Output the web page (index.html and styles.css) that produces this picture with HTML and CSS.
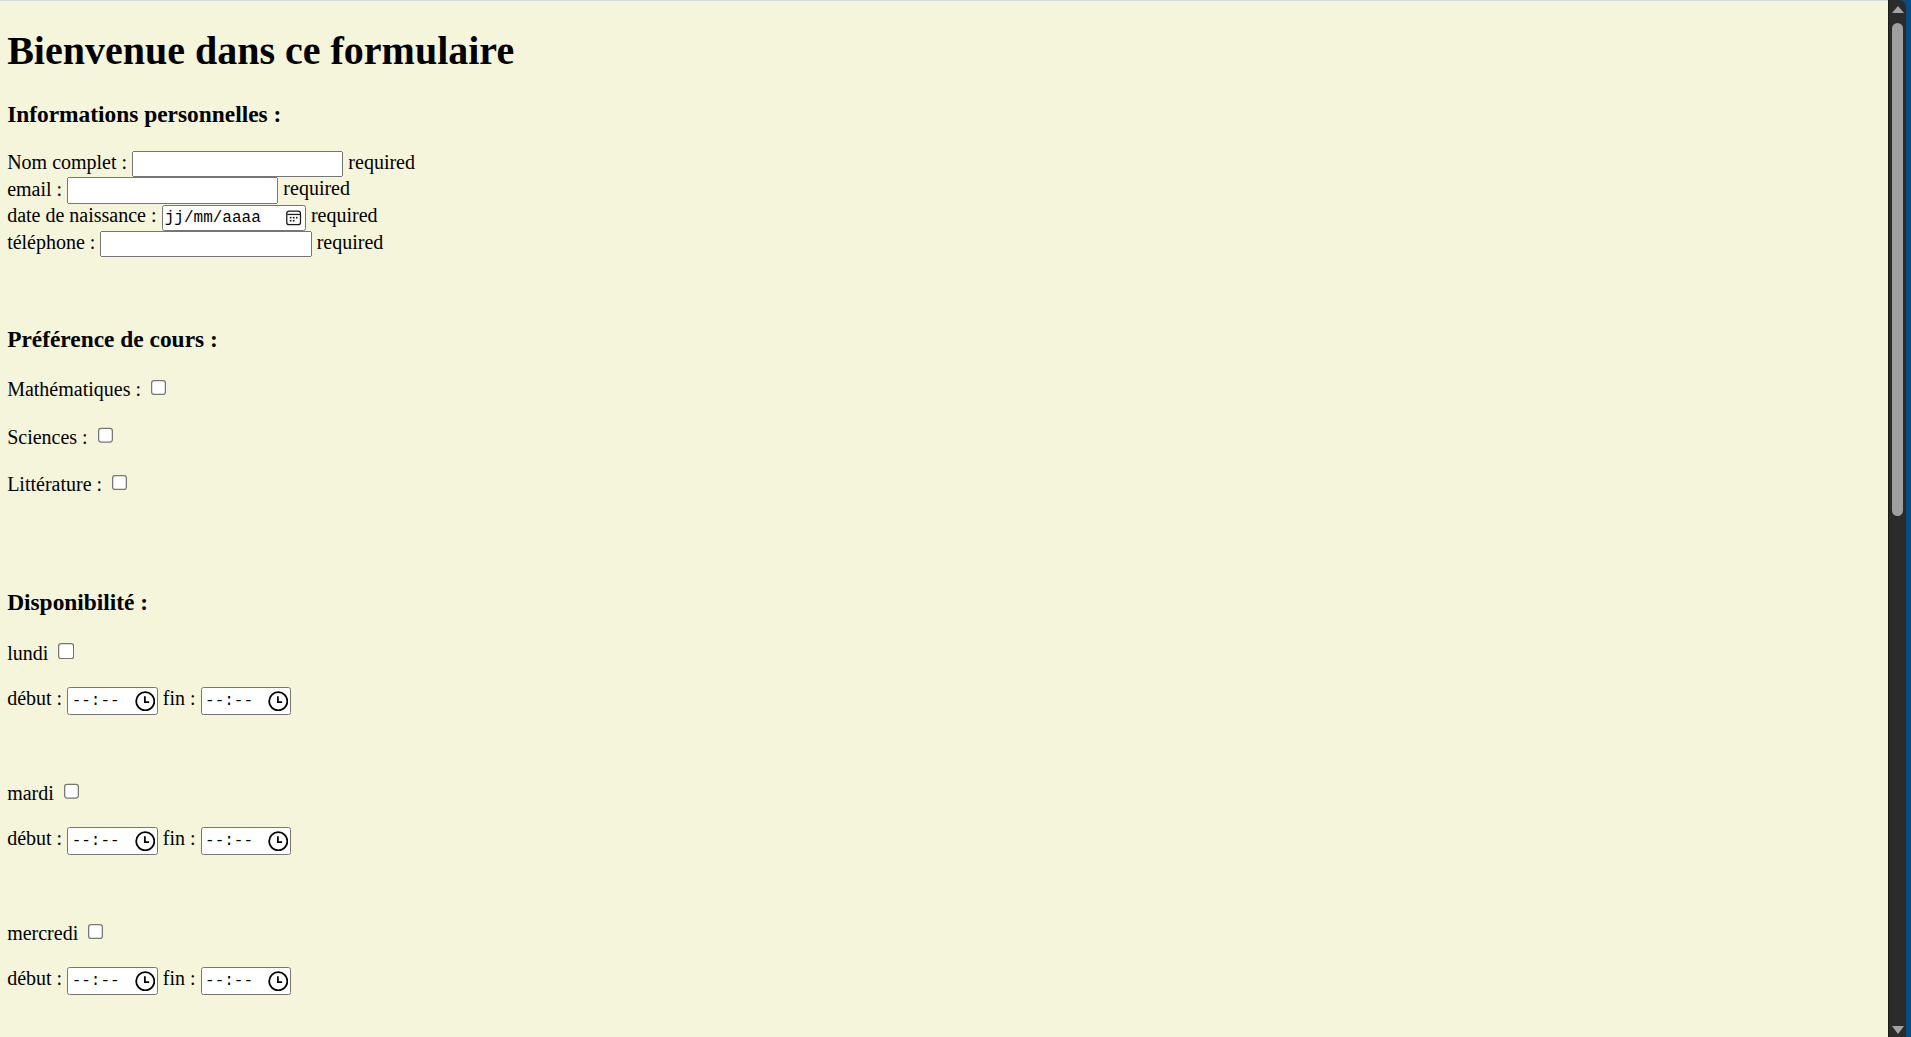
FILE: index.html
```html
<!DOCTYPE html>
<html lang="fr">
<head>
<meta charset="utf-8">
<title>Formulaire</title>
<link rel="stylesheet" href="styles.css">
</head>
<body>
<div class="page">
<h1>Bienvenue dans ce formulaire</h1>
<form class="form">
  <h3>Informations personnelles :</h3>
  <div class="info">
    <label>Nom complet : <input type="text" class="field"></label> required<br>
    <label>email : <input type="email" class="field"></label> required<br>
    <label>date de naissance : <span class="picker date-picker">jj/mm/aaaa<svg class="cal-icon" viewBox="0 0 12 12" aria-hidden="true"><rect x="0.6" y="0.6" width="10.8" height="10.8" rx="2" fill="none" stroke="#1a1a1a" stroke-width="1"/><path d="M1 3.3H11" stroke="#1a1a1a" stroke-width="1"/><g fill="#1a1a1a"><rect x="3" y="5.2" width="1.3" height="1.3"/><rect x="5.4" y="5.2" width="1.3" height="1.3"/><rect x="7.8" y="5.2" width="1.3" height="1.3"/><rect x="3" y="7.6" width="1.3" height="1.3"/><rect x="5.4" y="7.6" width="1.3" height="1.3"/></g></svg></span></label> required<br>
    <label>téléphone : <input type="tel" class="field"></label> required
  </div>
  <div class="gap gap-info"></div>

  <h3>Préférence de cours :</h3>
  <p class="check-row">Mathématiques : <input type="checkbox"></p>
  <p class="check-row">Sciences : <input type="checkbox"></p>
  <p class="check-row">Littérature : <input type="checkbox"></p>
  <div class="gap gap-courses"></div>

  <h3>Disponibilité :</h3>
  <p class="check-row">lundi <input type="checkbox"></p>
  <p>début : <span class="picker time-picker">--:--<svg class="clock-icon" viewBox="0 0 16 16" aria-hidden="true"><circle cx="8" cy="8" r="7.1" fill="none" stroke="#000" stroke-width="1.4"/><path d="M7.7 4V8.7H11" fill="none" stroke="#000" stroke-width="1.4"/></svg></span> fin : <span class="picker time-picker">--:--<svg class="clock-icon" viewBox="0 0 16 16" aria-hidden="true"><circle cx="8" cy="8" r="7.1" fill="none" stroke="#000" stroke-width="1.4"/><path d="M7.7 4V8.7H11" fill="none" stroke="#000" stroke-width="1.4"/></svg></span></p>
  <div class="gap gap-day"></div>

  <p class="check-row">mardi <input type="checkbox"></p>
  <p>début : <span class="picker time-picker">--:--<svg class="clock-icon" viewBox="0 0 16 16" aria-hidden="true"><circle cx="8" cy="8" r="7.1" fill="none" stroke="#000" stroke-width="1.4"/><path d="M7.7 4V8.7H11" fill="none" stroke="#000" stroke-width="1.4"/></svg></span> fin : <span class="picker time-picker">--:--<svg class="clock-icon" viewBox="0 0 16 16" aria-hidden="true"><circle cx="8" cy="8" r="7.1" fill="none" stroke="#000" stroke-width="1.4"/><path d="M7.7 4V8.7H11" fill="none" stroke="#000" stroke-width="1.4"/></svg></span></p>
  <div class="gap gap-day"></div>

  <p class="check-row">mercredi <input type="checkbox"></p>
  <p>début : <span class="picker time-picker">--:--<svg class="clock-icon" viewBox="0 0 16 16" aria-hidden="true"><circle cx="8" cy="8" r="7.1" fill="none" stroke="#000" stroke-width="1.4"/><path d="M7.7 4V8.7H11" fill="none" stroke="#000" stroke-width="1.4"/></svg></span> fin : <span class="picker time-picker">--:--<svg class="clock-icon" viewBox="0 0 16 16" aria-hidden="true"><circle cx="8" cy="8" r="7.1" fill="none" stroke="#000" stroke-width="1.4"/><path d="M7.7 4V8.7H11" fill="none" stroke="#000" stroke-width="1.4"/></svg></span></p>
  <div class="gap gap-day"></div>

  <p class="check-row">jeudi <input type="checkbox"></p>
  <p>début : <span class="picker time-picker">--:--<svg class="clock-icon" viewBox="0 0 16 16" aria-hidden="true"><circle cx="8" cy="8" r="7.1" fill="none" stroke="#000" stroke-width="1.4"/><path d="M7.7 4V8.7H11" fill="none" stroke="#000" stroke-width="1.4"/></svg></span> fin : <span class="picker time-picker">--:--<svg class="clock-icon" viewBox="0 0 16 16" aria-hidden="true"><circle cx="8" cy="8" r="7.1" fill="none" stroke="#000" stroke-width="1.4"/><path d="M7.7 4V8.7H11" fill="none" stroke="#000" stroke-width="1.4"/></svg></span></p>
  <div class="gap gap-day"></div>

  <p class="check-row">vendredi <input type="checkbox"></p>
  <p>début : <span class="picker time-picker">--:--<svg class="clock-icon" viewBox="0 0 16 16" aria-hidden="true"><circle cx="8" cy="8" r="7.1" fill="none" stroke="#000" stroke-width="1.4"/><path d="M7.7 4V8.7H11" fill="none" stroke="#000" stroke-width="1.4"/></svg></span> fin : <span class="picker time-picker">--:--<svg class="clock-icon" viewBox="0 0 16 16" aria-hidden="true"><circle cx="8" cy="8" r="7.1" fill="none" stroke="#000" stroke-width="1.4"/><path d="M7.7 4V8.7H11" fill="none" stroke="#000" stroke-width="1.4"/></svg></span></p>
  <div class="gap gap-day"></div>

  <p><button type="submit" class="submit">Envoyer</button></p>
</form>
</div>

<div class="scrollbar" aria-hidden="true">
  <div class="scroll-track">
    <div class="scroll-btn"><span class="arrow-up"></span></div>
    <div class="scroll-thumb"></div>
    <div class="scroll-fill"></div>
    <div class="scroll-btn scroll-btn-down"><span class="arrow-down"></span></div>
  </div>
</div>
</body>
</html>
```

FILE: styles.css
```css
html {
  background: #f5f5dc;
  box-shadow: inset 0 1px 0 #d6dcd9;
}

body {
  margin: 0;
  font-family: "Liberation Serif", "Times New Roman", Times, serif;
  font-size: 16px;
  color: #000;
}

.page {
  zoom: 1.25;
  margin: 0 8px 420px 5.7px;
}

h1 {
  font-size: 2em;
  font-weight: bold;
  margin: 0.67em 0;
}

h3 {
  font-size: 1.17em;
  font-weight: bold;
  margin: 1em 0;
}

p {
  margin: 1em 0;
}

.check-row {
  padding-bottom: 1.9px;
}

.form {
  margin: 0;
}

.field {
  box-sizing: border-box;
  width: 169px;
  font: 13.333px "Liberation Sans", Arial, sans-serif;
  padding: 1px 2px;
  vertical-align: baseline;
}

.picker {
  box-sizing: border-box;
  display: inline-flex;
  align-items: center;
  justify-content: space-between;
  vertical-align: baseline;
  background: #fff;
  border: 1px solid #767676;
  border-radius: 2px;
  font-family: "Liberation Mono", "DejaVu Sans Mono", monospace;
  font-size: 12.8px;
  color: #000;
}

.date-picker {
  width: 115.5px;
  height: 20.6px;
  padding: 0 2.6px 0 1.8px;
}

.time-picker {
  width: 72.5px;
  height: 22px;
  padding: 0 1.4px 0 2.8px;
}

.cal-icon {
  width: 12.2px;
  height: 12.6px;
  flex: none;
}

.clock-icon {
  width: 16.4px;
  height: 16.4px;
  flex: none;
}

.gap {
  display: block;
}

.gap-info {
  height: 36px;
}

.gap-courses {
  height: 38px;
}

.gap-day {
  height: 20px;
}

.submit {
  font: 13.333px "Liberation Sans", Arial, sans-serif;
}

/* window scrollbar drawn over the right edge */
.scrollbar {
  position: fixed;
  top: 0;
  right: 0;
  bottom: 0;
  width: 23px;
  display: flex;
  background: #0c4c7e;
}

.scroll-track {
  box-sizing: border-box;
  width: 18px;
  display: flex;
  flex-direction: column;
  align-items: center;
  background: #2b2b2b;
  border-left: 1px solid #1a1a1a;
  border-top-right-radius: 7px;
}

.scroll-btn {
  height: 17px;
  flex: none;
  display: flex;
  align-items: center;
  justify-content: center;
  padding-top: 2px;
  box-sizing: border-box;
}

.scroll-btn-down {
  height: 19px;
  align-items: flex-start;
  padding-top: 8px;
}

.arrow-up {
  width: 0;
  height: 0;
  border-left: 6px solid transparent;
  border-right: 6px solid transparent;
  border-bottom: 7px solid #a3a3a3;
}

.arrow-down {
  width: 0;
  height: 0;
  border-left: 6px solid transparent;
  border-right: 6px solid transparent;
  border-top: 8px solid #a3a3a3;
}

.scroll-thumb {
  flex: none;
  width: 11px;
  height: 493px;
  margin-top: 5.5px;
  border-radius: 5.5px;
  background: #9f9f9f;
}

.scroll-fill {
  flex: 1;
}
```
